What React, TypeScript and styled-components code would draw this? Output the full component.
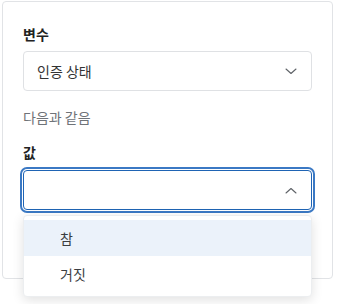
import styled, { createGlobalStyle } from "styled-components";

const GlobalStyle = createGlobalStyle`
  html, body {
    margin: 0;
    min-height: 304px;
    background: #fff;
    font-family: "Noto Sans CJK KR", "Noto Sans", sans-serif;
  }
`;

const Chevron = ({ up }: { up?: boolean }) => (
  <svg width="12" height="7" viewBox="0 0 12 7" fill="none">
    <path
      d={up ? "M1 6L6 1.5L11 6" : "M1 1L6 5.5L11 1"}
      stroke="#5f6368"
      strokeWidth="1.1"
      strokeLinecap="round"
      strokeLinejoin="round"
    />
  </svg>
);

const App = () => {
  return (
    <>
      <GlobalStyle />
      <Page>
        <Card>
          <Label>변수</Label>
          <Select>
            <span>인증 상태</span>
            <Chevron />
          </Select>
          <Operator>다음과 같음</Operator>
          <Label>값</Label>
          <Field>
            <Select $focused>
              <span />
              <Chevron up />
            </Select>
            <Menu>
              <Option $active>참</Option>
              <Option>거짓</Option>
            </Menu>
          </Field>
        </Card>
      </Page>
    </>
  );
};

const Page = styled.div`
  height: 304px;
  padding: 1px 0 0 2px;
  box-sizing: border-box;
`;

const Card = styled.div`
  box-sizing: border-box;
  width: 331px;
  height: 278px;
  padding: 22px 20px 0;
  border: 1px solid #e1e3e6;
  border-radius: 4px;
  display: flex;
  flex-direction: column;
`;

const Label = styled.div`
  font-size: 14px;
  line-height: 20px;
  font-weight: 700;
  color: #222;
  margin-bottom: 7px;
`;

const Select = styled.div<{ $focused?: boolean }>`
  box-sizing: border-box;
  height: 40px;
  padding: 0 14px 0 13px;
  display: flex;
  align-items: center;
  justify-content: space-between;
  background: #fff;
  border: 1px solid ${(p) => (p.$focused ? "#1f64b4" : "#dfe1e4")};
  border-radius: 4px;
  box-shadow: ${(p) =>
    p.$focused ? "0 0 0 1px #fff, 0 0 0 3px #3b79c4" : "none"};
  font-size: 14px;
  color: #333;
`;

const Operator = styled.div`
  font-size: 14px;
  line-height: 20px;
  color: #6f7378;
  margin: 16px 0 15px;
`;

const Field = styled.div`
  position: relative;
  margin-top: 1px;
`;

const Menu = styled.div`
  position: absolute;
  top: 45px;
  left: 0;
  right: 0;
  padding: 4px 0;
  background: #fff;
  border: 1px solid #eceef0;
  border-radius: 4px;
  box-shadow: 0 3px 12px rgba(0, 0, 0, 0.12);
`;

const Option = styled.div<{ $active?: boolean }>`
  height: 36px;
  padding-left: 36px;
  display: flex;
  align-items: center;
  font-size: 14px;
  color: #3a3d41;
  background: ${(p) => (p.$active ? "#ebf2fa" : "transparent")};
`;

export default App;
